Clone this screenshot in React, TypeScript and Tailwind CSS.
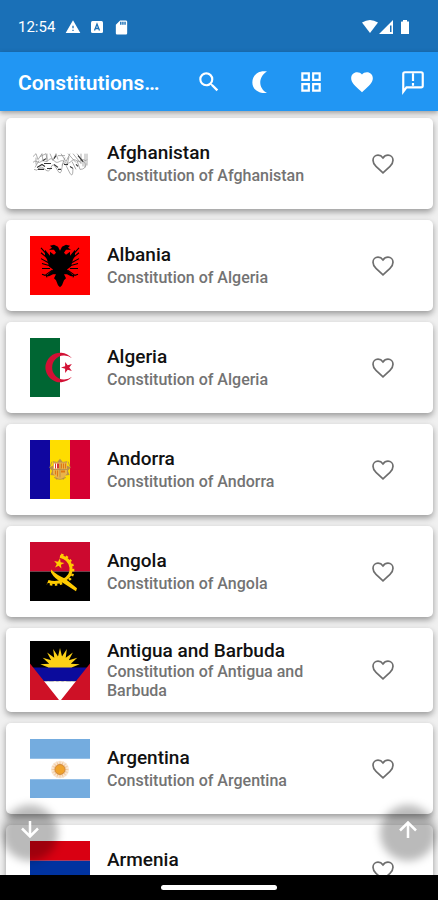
import type { ReactNode } from "react";
import { MdFavorite, MdGridView, MdSearch, MdSdCard, MdWarning } from "react-icons/md";

type Country = {
  name: string;
  subtitle: string;
  flag: ReactNode;
  tall?: boolean;
};

function Flag({ children }: { children: ReactNode }) {
  return (
    <svg viewBox="0 0 60 60" preserveAspectRatio="none" className="h-[59px] w-[60px] shrink-0" aria-hidden="true">
      {children}
    </svg>
  );
}

function starPoints(cx: number, cy: number, outer: number, inner: number, count: number, turn = -90) {
  const points: string[] = [];
  for (let i = 0; i < count * 2; i++) {
    const r = i % 2 === 0 ? outer : inner;
    const a = ((turn + (i * 180) / count) * Math.PI) / 180;
    points.push(`${(cx + r * Math.cos(a)).toFixed(2)},${(cy + r * Math.sin(a)).toFixed(2)}`);
  }
  return points.join(" ");
}

const afghanistan = (
  <Flag>
    <g fill="none" stroke="#8a8a8a" strokeWidth="0.7">
      <path d="M3 23l3-3 2 6 4-6 1 8M10 23l6-3 1 6M17 20v8M20 20l3 7 3-7 2 6M28 22h7M31 20l5 8 4-8M38 20l8 9M43 20l8 10M47 20l8 10M51 20v10M55 20v14M57 20v12" />
      <path d="M3 29c3-4 5 2 8-1s4 2 7-1 4-2 7 1 6-3 9 0 5 2 8-1 6 3 9 0 4 2 6-1" />
      <path d="M4 36q3 2 5-1t6 1 6-2 6 2 5-2 6 2 5-1M42 28l4 8M47 27l3 9q6 0 6-6M53 27v6M35 24l-3 8M39 23l-2 9M6 24v7M9 27l-4 7" />
    </g>
    <g fill="none" stroke="#333" strokeWidth="1.1">
      <path d="M7 34l5-3 3 2M14 30h7M24 31l4 3M28 36h3M34 31h4M40 33l3 2M13 27l3-2M46 31l2 2M48 22l5 6M24 25l2-3M8 36h6M17 35h5" />
    </g>
  </Flag>
);

const albania = (
  <Flag>
    <path fill="#f00" d="M0 0h60v60H0z" />
    <path d="M30 15l-2-4-4-2-4 1 2 2-3 2 5 0 2 3-2 2-4-3v4l-5-6v6l2 4 2 7 4 3-3 3-4 4 3 0 4-2 3 0-2 4 2 2 2 5 2 2 2-2 2-5 2-2-2-4 3 0 4 2 3 0-4-4-3-3 4-3 2-7 2-4v-6l-5 6v-4l-4 3-2-2 2-3 5 0-3-2 2-2-4-1-4 2z" />
    <path
      fill="none"
      stroke="#000"
      strokeWidth="1.1"
      d="M18 20l-7-8M18 23l-7-6M18 27l-7-4M19 30l-7-2M20 33l-8 0M42 20l7-8M42 23l7-6M42 27l7-4M41 30l7-2M40 33l8 0M22 35l-7 5-3-1M16 39l1 3M38 35l7 5 3-1M44 39l-1 3"
    />
  </Flag>
);

const algeria = (
  <Flag>
    <path fill="#fff" d="M0 0h60v60H0z" />
    <path fill="#006633" d="M0 0h30v60H0z" />
    <path fill="#d21034" d="M42 20.500A15 15 0 1 0 42 39.500A12.200 12.200 0 1 1 42 20.500z" />
    <polygon fill="#d21034" points={starPoints(37, 30, 6, 2.3, 5, 180)} />
  </Flag>
);

const andorra = (
  <Flag>
    <path fill="#10069f" d="M0 0h20v60H0z" />
    <path fill="#fedd00" d="M20 0h20v60H20z" />
    <path fill="#d50032" d="M40 0h20v60H40z" />
    <polygon fill="#b98f4b" points={starPoints(30, 30, 11, 8, 9)} />
    <path fill="#e9b34a" d="M23 23h14v11q-3 5-7 6-4-1-7-6z" />
    <path fill="#fff" d="M24 24h5v5h-5z" />
    <path fill="#d5322f" d="M25 24h1v5h-1zM27 24h2v5h-2z" />
    <path fill="#e07812" d="M31 24h1v5h-1zM33 24h1v5h-1zM35 24h1v5h-1zM25 31h1v4h-1zM27 31h1v6h-1zM31 31h4v2h-4z" />
    <path fill="none" stroke="#b08a50" strokeWidth="0.8" d="M30 24v14M23 30h14M22 22l-2 5M38 22l2 5M24 38q6 4 12 0" />
  </Flag>
);

const angola = (
  <Flag>
    <path fill="#cc092f" d="M0 0h60v30H0z" />
    <path d="M0 30h60v30H0z" />
    <polygon fill="#ffcb00" points={starPoints(29, 22, 5.5, 2.2, 5, -80)} />
    <path fill="none" stroke="#ffcb00" strokeWidth="3" d="M30 14.500Q40 17 41 26T33 39Q26 43 18 40" />
    <path
      fill="none"
      stroke="#ffcb00"
      strokeWidth="2.500"
      strokeDasharray="2.500 2.500"
      d="M31 13Q42 16 43 27T34 41Q26 45 17 42"
    />
    <path fill="#ffcb00" d="M21 28q6 6 14 9l12 10-1 3-14-9q-7-3-11-10z" />
  </Flag>
);

const antigua = (
  <Flag>
    <path d="M0 0h60v60H0z" />
    <polygon fill="#fcd116" points={starPoints(30, 27, 20, 11.5, 18)} />
    <path fill="#0b0b9c" d="M0 27h60v14H0z" />
    <path fill="#fff" d="M0 41h60v19H0z" />
    <path fill="#ce1126" d="M0 23l29 37H0zM60 23L31 60h29z" />
  </Flag>
);

const argentina = (
  <Flag>
    <path fill="#fff" d="M0 0h60v60H0z" />
    <path fill="#74acdf" d="M0 0h60v20H0zM0 41h60v19H0z" />
    <circle cx="30" cy="31" r="9" fill="#f9e6d2" />
    <polygon fill="#f0c79c" points={starPoints(30, 31, 9, 5, 16)} />
    <circle cx="30" cy="31" r="5" fill="#f0a32c" stroke="#d08a3c" />
  </Flag>
);

const armenia = (
  <Flag>
    <path fill="#d90012" d="M0 0h60v20H0z" />
    <path fill="#0033a0" d="M0 20h60v20H0z" />
    <path fill="#f2a800" d="M0 40h60v20H0z" />
  </Flag>
);

const countries: Country[] = [
  { name: "Afghanistan", subtitle: "Constitution of Afghanistan", flag: afghanistan },
  { name: "Albania", subtitle: "Constitution of Algeria", flag: albania },
  { name: "Algeria", subtitle: "Constitution of Algeria", flag: algeria },
  { name: "Andorra", subtitle: "Constitution of Andorra", flag: andorra },
  { name: "Angola", subtitle: "Constitution of Angola", flag: angola },
  { name: "Antigua and Barbuda", subtitle: "Constitution of Antigua and Barbuda", flag: antigua, tall: true },
  { name: "Argentina", subtitle: "Constitution of Argentina", flag: argentina },
  { name: "Armenia", subtitle: "Constitution of Armenia", flag: armenia },
];

function StatusBar() {
  return (
    <div className="flex h-[52px] shrink-0 items-center justify-between bg-[#1a70b7] pt-0.5 pr-7 pl-[18px] text-white">
      <div className="flex items-center gap-2.5">
        <span className="text-[15px] leading-5">12:54</span>
        <MdWarning className="size-4" />
        <svg viewBox="0 0 12 12" className="size-3">
          <rect width="12" height="12" rx="1.500" fill="#fff" />
          <path d="M3.500 9.500L6 3l2.500 6.500M4.500 7.500h3" fill="none" stroke="#1a70b7" strokeWidth="1.300" />
        </svg>
        <MdSdCard className="size-[17px]" />
      </div>
      <svg viewBox="0 0 48 16" className="h-4 w-12" fill="#fff">
        <path d="M0 3.500Q8 -1.500 16 3.500L8 14z" />
        <path fillRule="evenodd" d="M31 1v14H17zM28 6.500V13h1.500V6.500z" />
        <path d="M39.500 2.500H41V1h4v1.500h2V15h-8V3z" />
      </svg>
    </div>
  );
}

function AppBar() {
  return (
    <header className="relative z-10 flex h-[59px] shrink-0 items-center bg-[#2196f3] pl-[18px] text-white shadow-[0_2px_5px_rgba(0,0,0,0.35)]">
      <h1 className="min-w-0 flex-1 truncate pt-0.5 text-[21px] leading-7 font-semibold">Constitutions…</h1>
      <nav className="flex shrink-0 items-center">
        <button type="button" aria-label="Search" className="flex w-[51px] justify-center">
          <MdSearch className="size-[26px]" />
        </button>
        <button type="button" aria-label="Dark mode" className="flex w-[51px] justify-center">
          <svg viewBox="0 0 26 26" className="size-[26px]" fill="currentColor">
            <path d="M20 2.500C2 -1 -1 26 20 24C11 19 11 8 20 2.500z" />
          </svg>
        </button>
        <button type="button" aria-label="Grid view" className="flex w-[51px] justify-center">
          <MdGridView className="size-[26px]" />
        </button>
        <button type="button" aria-label="Favorites" className="flex w-[51px] justify-center">
          <MdFavorite className="size-[26px]" />
        </button>
        <button type="button" aria-label="Feedback" className="flex w-[51px] justify-center">
          <svg viewBox="0 0 24 24" className="size-[26px]" fill="none" stroke="currentColor" strokeWidth="2">
            <path d="M3 21V4.500Q3 3 4.500 3h15Q21 3 21 4.500v11Q21 17 19.500 17H6z" />
            <path d="M12 4v7M12 13v2.500" />
          </svg>
        </button>
      </nav>
    </header>
  );
}

function CountryCard({ name, subtitle, flag, tall }: Country) {
  return (
    <li
      className={`flex shrink-0 items-center rounded-[5px] bg-white pr-[37px] pl-6 shadow-[0_3px_6px_rgba(0,0,0,0.36)] ${
        tall ? "py-3" : "py-4"
      }`}
    >
      {flag}
      <div className={`ml-[17px] flex min-w-0 flex-1 flex-col ${tall ? "" : "gap-0.5"}`}>
        <h2 className="text-[19px] leading-[22px] font-medium text-[#111]">{name}</h2>
        <p className="max-w-[220px] text-[16px] leading-[19px] font-medium text-[#737373]">{subtitle}</p>
      </div>
      <button type="button" aria-label={`Add ${name} to favorites`} className="ml-4 shrink-0 text-[#6e6e6e]">
        <svg viewBox="0 0 26 26" className="size-[26px]" fill="none" stroke="currentColor" strokeWidth="1.700">
          <path d="M13 21.800L6 15.300C3.800 13.200 3 11.400 3 9.200C3 6.200 5.300 4.200 8 4.200C10 4.200 11.800 5.200 13 6.900C14.200 5.200 16 4.200 18 4.200C20.700 4.200 23 6.200 23 9.200C23 11.400 22.200 13.200 20 15.300z" />
        </svg>
      </button>
    </li>
  );
}

function ScrollButton({ label, path }: { label: string; path: string }) {
  return (
    <button type="button" aria-label={label} className="relative flex size-14 items-center justify-center text-white">
      <span className="absolute inset-0 rounded-full bg-black/27 blur-[4px]" />
      <span className="relative pb-2">
        <svg viewBox="0 0 24 24" className="size-6" fill="none" stroke="currentColor" strokeWidth="2.500">
          <path d={path} />
        </svg>
      </span>
    </button>
  );
}

export default function App() {
  return (
    <div className="flex h-screen flex-col overflow-hidden bg-[#f0f0f0] font-[Roboto,sans-serif]">
      <StatusBar />
      <AppBar />
      <main className="relative min-h-0 flex-1 overflow-hidden">
        <ul className="flex flex-col gap-[11px] pt-[7px] pr-[5px] pl-1.5">
          {countries.map((country) => (
            <CountryCard key={country.name} {...country} />
          ))}
        </ul>
        <div className="absolute inset-x-0 bottom-3.5 flex justify-between px-0.5">
          <ScrollButton label="Scroll to bottom" path="M12 4v15M4 11.500l8 8 8-8" />
          <ScrollButton label="Scroll to top" path="M12 21V6M4 13.500l8-8 8 8" />
        </div>
      </main>
      <div className="flex h-[25px] shrink-0 items-center justify-center bg-black">
        <span className="h-[5px] w-[116px] rounded-full bg-white" />
      </div>
    </div>
  );
}
